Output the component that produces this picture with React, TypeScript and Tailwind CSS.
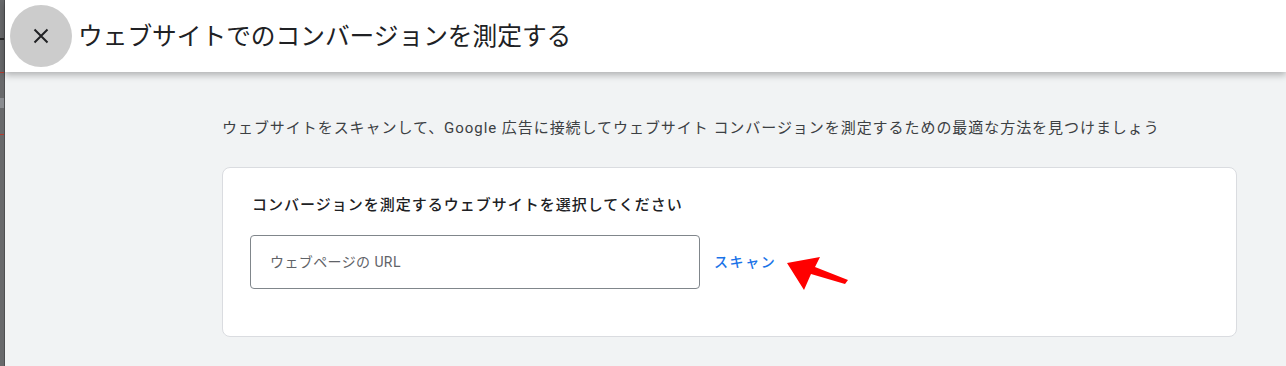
import React from "react";

const jp = { fontFamily: 'Roboto, "Noto Sans CJK JP", "Noto Sans", sans-serif' };

export default function App() {
  return (
    <div className="flex h-[366px] w-[1286px] overflow-hidden" style={jp}>
      <div className="relative w-[5px] shrink-0 bg-[#68696b]">
        <div className="absolute left-0 top-[38px] h-[2px] w-[5px] bg-[#2a2a2a]" />
        <div className="absolute left-0 top-[72px] h-px w-[5px] bg-[#b33b30]" />
        <div className="absolute left-0 top-[98px] h-[10px] w-[5px] bg-[#8a8c90]" />
        <div className="absolute left-0 top-[134px] h-px w-[5px] bg-[#b33b30]" />
        <div className="absolute right-0 top-0 h-full w-px bg-[#4e4f51]" />
      </div>
      <div className="flex flex-1 flex-col bg-[#f1f3f4]">
        <header className="relative z-10 flex h-[72px] shrink-0 items-center bg-white pl-[5px] shadow-[0_3px_7px_rgba(0,0,0,0.28)]">
          <div className="flex h-[62px] w-[62px] items-center justify-center rounded-full bg-[#cccccc]">
            <svg width="16" height="16" viewBox="0 0 16 16">
              <path d="M1.5 1.5 L14.5 14.5 M14.5 1.5 L1.5 14.5" stroke="#202124" strokeWidth="2" />
            </svg>
          </div>
          <h1 className="ml-[6px] mt-[2px] text-[24.7px] leading-none text-[#202124]">
            ウェブサイトでのコンバージョンを測定する
          </h1>
        </header>
        <main className="flex flex-col pl-[217px] pr-[49px] pt-[46px]">
          <p className="text-[15px] leading-[20px] tracking-[0.95px] text-[#3c4043]">
            ウェブサイトをスキャンして、Google 広告に接続してウェブサイト コンバージョンを測定するための最適な方法を見つけましょう
          </p>
          <section className="mt-[29px] flex h-[170px] flex-col rounded-[8px] border border-[#dadce0] bg-white pl-[27px] pt-[27px]">
            <h2 className="pl-[2px] text-[15px] font-medium leading-[20px] tracking-[1px] text-[#202124]">
              コンバージョンを測定するウェブサイトを選択してください
            </h2>
            <div className="mt-[20px] flex items-center">
              <div className="flex h-[54px] w-[450px] items-center rounded-[4px] border border-[#80868b] pl-[19px]">
                <span className="text-[14px] tracking-[0.4px] text-[#5f6368]">ウェブページの URL</span>
              </div>
              <div className="relative ml-[14px]">
                <span className="text-[14px] font-medium tracking-[1.6px] text-[#1a73e8]">スキャン</span>
                <svg
                  className="absolute left-[72px] top-[7px]"
                  width="64"
                  height="36"
                  viewBox="0 0 64 36"
                >
                  <polygon
                    points="1,6 34,0 29,10 62,23 59,27 25,17 18,33"
                    fill="#ff0000"
                  />
                </svg>
              </div>
            </div>
          </section>
        </main>
      </div>
    </div>
  );
}
